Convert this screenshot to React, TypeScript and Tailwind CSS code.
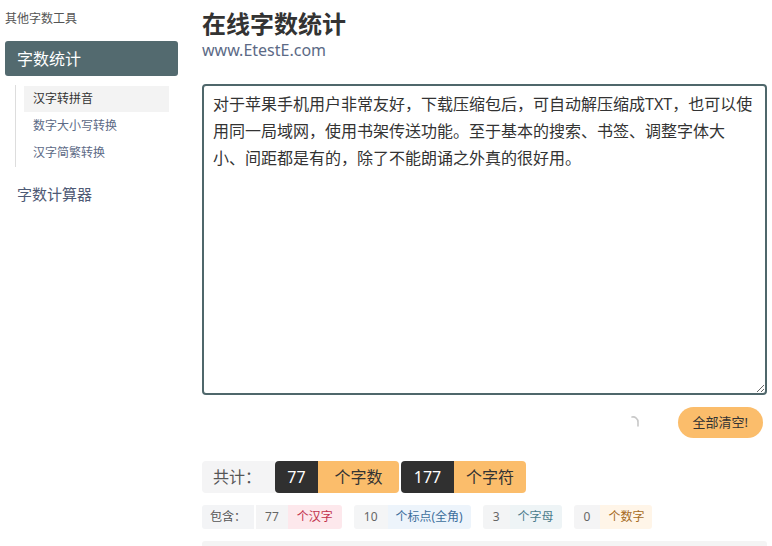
import React from "react";

const text =
  "对于苹果手机用户非常友好，下载压缩包后，可自动解压缩成TXT，也可以使用同一局域网，使用书架传送功能。至于基本的搜索、书签、调整字体大小、间距都是有的，除了不能朗诵之外真的很好用。";

const font = { fontFamily: '"Noto Sans", "Noto Sans CJK SC", sans-serif' };

function Chip({ n, label, numBg, labelBg, labelColor }: { n: string; label: string; numBg: string; labelBg: string; labelColor: string }) {
  return (
    <div className="flex h-[24px] items-stretch overflow-hidden rounded-[3px] text-[12px]">
      <span className={`flex items-center px-[10px] text-[#666] ${numBg}`}>{n}</span>
      <span className={`flex items-center px-[8px] ${labelBg} ${labelColor}`}>{label}</span>
    </div>
  );
}

export default function App() {
  return (
    <div className="flex h-[546px] w-[772px] overflow-hidden bg-white" style={font}>
      <aside className="w-[202px] shrink-0 pl-[5px] pr-[24px] pt-[10px]">
        <div className="text-[12px] leading-[18px] text-[#555]">其他字数工具</div>
        <div className="mt-[13px] flex h-[35px] items-center rounded-[3px] bg-[#536a6f] pl-[12px] text-[16px] text-white">
          字数统计
        </div>
        <div className="ml-[10px] mr-[9px] mt-[9px] border-l border-[#ddd] py-[1px] pl-[8px]">
          <div className="flex h-[26px] items-center bg-[#f3f3f3] pl-[9px] text-[12px] text-[#333]">汉字转拼音</div>
          <div className="flex h-[27px] items-center pl-[9px] text-[12px] text-[#5c6a86]">数字大小写转换</div>
          <div className="flex h-[27px] items-center pl-[9px] text-[12px] text-[#5c6a86]">汉字简繁转换</div>
        </div>
        <div className="mt-[16px] pl-[12px] text-[15px] text-[#4e5a75]">字数计算器</div>
      </aside>
      <main className="flex w-[565px] flex-col [&>*]:shrink-0">
        <h1 className="mt-[8px] text-[24px] font-bold leading-[32px] text-[#333]">在线字数统计</h1>
        <div className="text-[16px] leading-[20px] text-[#5c6a86]">www.EtestE.com</div>
        <textarea
          defaultValue={text}
          className="mt-[24px] h-[311px] w-[565px] shrink-0 rounded-[4px] border-2 border-[#4f676b] px-[9px] py-[5px] text-[16px] leading-[27px] text-[#333] outline-none"
          style={font}
        />
        <div className="mt-[12px] flex h-[31px] items-center justify-end">
          <svg width="14" height="14" viewBox="0 0 14 14" className="mr-[37px] mt-[-2px]">
            <path d="M5 2 A5 5 0 0 1 11 7 L11 11" fill="none" stroke="#c8c8c8" strokeWidth="1.6" strokeLinecap="round" />
          </svg>
          <button className="mr-[4px] h-[31px] rounded-full bg-[#fbbd6b] px-[15px] text-[13px] text-[#333]">全部清空!</button>
        </div>
        <div className="mt-[23px] flex h-[32px] items-stretch gap-[2px] text-[16px]">
          <span className="flex items-center rounded-l-[4px] bg-[#f4f4f5] pl-[11px] pr-[14px] text-[#555]">共计：</span>
          <div className="ml-[-2px] flex overflow-hidden rounded-[4px]">
            <span className="flex w-[43px] items-center justify-center bg-[#303030] text-white">77</span>
            <span className="flex w-[81px] items-center justify-center bg-[#fbbd6b] text-[#333]">个字数</span>
          </div>
          <div className="flex overflow-hidden rounded-[4px]">
            <span className="flex w-[53px] items-center justify-center bg-[#303030] text-white">177</span>
            <span className="flex w-[72px] items-center justify-center bg-[#fbbd6b] text-[#333]">个字符</span>
          </div>
        </div>
        <div className="mt-[12px] flex items-center gap-[12px]">
          <div className="flex h-[24px] items-stretch overflow-hidden rounded-[3px] text-[12px]">
            <span className="flex items-center bg-[#f3f4f6] px-[8px] text-[#555]">包含：</span>
            <span className="ml-[2px] flex items-center bg-[#f4f4f5] px-[9px] text-[#666]">77</span>
            <span className="flex items-center bg-[#fde8ec] px-[9px] text-[#c2334d]">个汉字</span>
          </div>
          <Chip n="10" label="个标点(全角)" numBg="bg-[#f4f5f6]" labelBg="bg-[#edf4fb]" labelColor="text-[#3c6e9c]" />
          <Chip n="3" label="个字母" numBg="bg-[#f3f4f5]" labelBg="bg-[#eef4f6]" labelColor="text-[#4b7c8c]" />
          <Chip n="0" label="个数字" numBg="bg-[#f4f4f5]" labelBg="bg-[#fff5e8]" labelColor="text-[#a66b22]" />
        </div>
        <div className="mt-[12px] h-[10px] w-[565px] shrink-0 rounded-[3px] bg-[#f4f4f4]" />
      </main>
    </div>
  );
}
